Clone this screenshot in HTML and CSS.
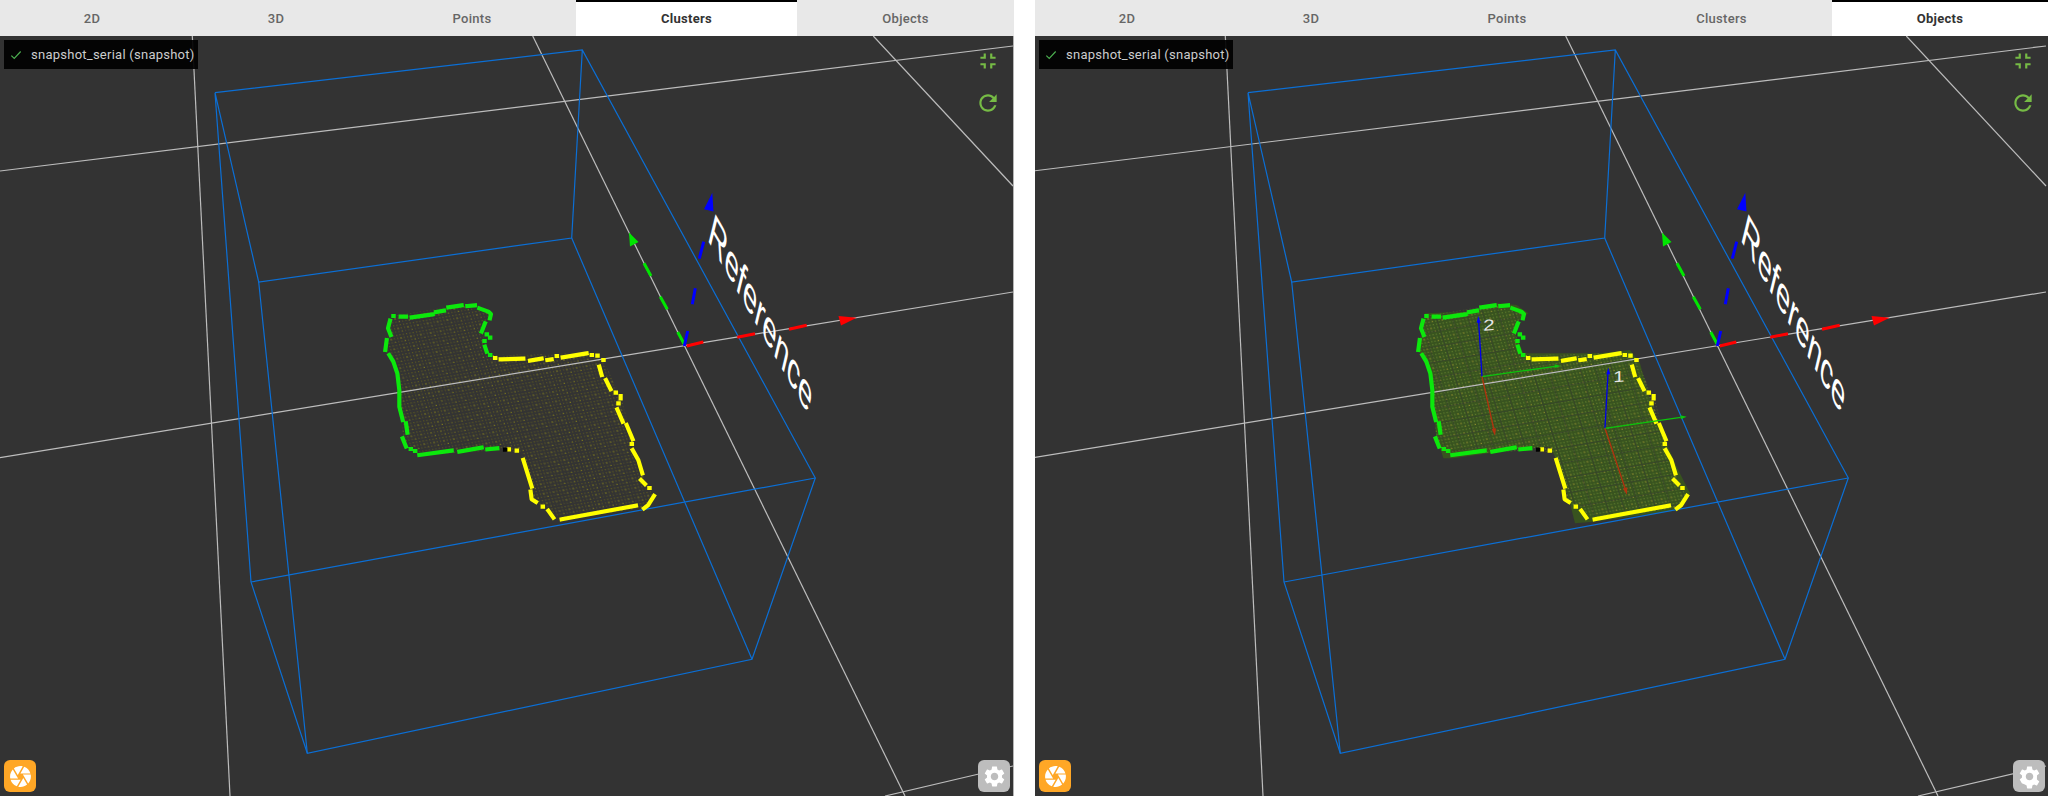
FILE: index.html
```html
<!DOCTYPE html>
<html lang="en">
<head>
<meta charset="utf-8">
<title>Point cloud viewer</title>
<link rel="stylesheet" href="styles.css">
</head>
<body>
<main class="page">
  <section class="panel panel-left">
    <nav class="tabs">
      <a class="tab tab-2d">2D</a>
      <a class="tab tab-3d">3D</a>
      <a class="tab tab-points">Points</a>
      <a class="tab tab-clusters active">Clusters</a>
      <a class="tab tab-objects">Objects</a>
    </nav>
    <div class="viewport">
      <svg class="scene" viewBox="0 0 1013 760" width="1013" height="760">
        <defs>
          <pattern id="dots" width="30" height="30" patternUnits="userSpaceOnUse" patternTransform="matrix(.985 -.17 .3 .95 0 0)">
            <path class="dot-dim" d="M3 3h3.5v3.5h-3.5zM13 3h3.5v3.5h-3.5zM23 3h3.5v3.5h-3.5zM3 13h3.5v3.5h-3.5zM23 13h3.5v3.5h-3.5zM3 23h3.5v3.5h-3.5zM13 23h3.5v3.5h-3.5z"/>
            <path class="dot-bright" d="M13 13h4v4h-4zM23 23h4v4h-4z"/>
          </pattern>
          <pattern id="dots-lit" width="30" height="30" patternUnits="userSpaceOnUse" patternTransform="matrix(.985 -.17 .3 .95 0 0)">
            <path class="dot-lit-dim" d="M3 3h4v4h-4zM13 3h4v4h-4zM23 3h4v4h-4zM3 13h4v4h-4zM23 13h4v4h-4zM3 23h4v4h-4zM13 23h4v4h-4z"/>
            <path class="dot-lit-bright" d="M13 13h4v4h-4zM23 23h4v4h-4z"/>
          </pattern>
          <pattern id="bands" width="46" height="46" patternUnits="userSpaceOnUse" patternTransform="matrix(.985 -.17 .3 .95 8 5)">
            <path class="band" d="M0 0H46M0 0V46"/>
          </pattern>
          <polygon id="cloud-shape" points="100,78 300,45 390,70 365,120 385,195 680,190 730,210 782,320 847,550 880,618 850,655 605,688 525,636 485,490 430,480 175,495 130,445 112,250 76,180 88,100"/>
          <g id="lines">
            <g class="grid-line">
              <line x1="0" y1="135" x2="1013" y2="10"/>
              <line x1="0" y1="421.7" x2="1013" y2="256"/>
              <line x1="885" y1="760" x2="1013" y2="730"/>
              <line x1="192.3" y1="0" x2="230" y2="760"/>
              <line x1="532.7" y1="0" x2="905" y2="760"/>
              <line x1="873.3" y1="0" x2="1013" y2="150"/>
            </g>
            <g class="box-line">
              <path d="M215 56.7L582.3 14L815.3 442L752 623.3L307.3 717.3L251 546L215 56.7L258.7 246L571.7 202L582.3 14"/>
              <path d="M258.7 246L307.3 717.3M251 546L815.3 442M571.7 202L752 623.3"/>
            </g>
          </g>
          <g id="outline" transform="translate(360 254) scale(.3333)">
            <path class="edge-green" d="M100 78h1M122 80H138M155 82L218 73M228 66L252 62M265 52L305 46M322 48L345 46M358 55L385 65L393 72L390 85M375 100L365 125M380 133h1M390 143h1M373 153h1M375 170L380 185M390 195h1M90 92L84 115L92 135M80 150L76 180M88 195L100 215L112 250L118 300L118 350L128 390M138 400L142 428M128 445L138 470M152 477h1M165 483h1M178 495L275 482M298 485L365 473M382 478L412 475"/>
            <path class="edge-yellow" d="M405 204h1M422 208L490 206M510 212L545 206M562 210L575 208M590 198h1M608 202L680 190M695 195h1M712 197h1M730 210h1M718 230L725 255M738 270L752 298M767 308h1M782 318V325M775 340h1M772 358L788 395M800 405L818 448M815 462h1M818 480L835 510L847 550M843 570L855 582M868 594h1M882 618L865 645L852 655M828 647L605 688M580 683L565 662M548 650h1M528 636L515 628L512 605M515 590L490 510M470 482h1M446 478h1"/>
            <path class="edge-black" d="M435 479h1"/>
          </g>
          <g id="reference">
            <path class="axis-red" d="M686.7 310L703.3 306M737.3 301.3L755 297.7M789 293.3L806.7 289.3"/>
            <polygon class="fill-red" points="856.7,281.7 838.5,280 841,289.5"/>
            <path class="axis-green" d="M684.3 308.3L677.7 296M667.3 273.3L660.3 260.7M651 240L644 227.3"/>
            <polygon class="fill-green" points="629,196.5 630,210.5 638.5,206"/>
            <path class="axis-blue" d="M684.3 310L687.7 295M692.3 268.3L695.3 252.3M699.3 222.7L703.7 205.7"/>
            <polygon class="fill-blue" points="712.3,156.7 704,173.3 713.5,175.5"/>
            <text class="ref-label" transform="matrix(.55 .955 -.245 1.01 707 203)">Reference</text>
          </g>
        </defs>
        <g transform="translate(360 254) scale(.3333)">
          <use class="cloud" href="#cloud-shape"/>
          <use class="cloud-bands" href="#cloud-shape"/>
        </g>
        <use href="#lines"/>
        <use href="#outline"/>
        <use href="#reference"/>
      </svg>
      <div class="source-badge">
        <svg class="check" viewBox="0 0 24 24" width="14" height="14"><path d="M4 13l5 5L20 6"/></svg>
        <span>snapshot_serial (snapshot)</span>
      </div>
      <div class="view-tools">
        <svg class="tool-icon" viewBox="0 0 24 24" width="26" height="26"><path d="M5 16h3v3h2v-5H5v2zm3-8H5v2h5V5H8v3zm6 11h2v-3h3v-2h-5v5zm2-11V5h-2v5h5V8h-3z"/></svg>
        <svg class="tool-icon" viewBox="0 0 24 24" width="26" height="26"><path d="M17.65 6.35C16.2 4.9 14.21 4 12 4c-4.42 0-7.99 3.58-7.99 8s3.57 8 7.99 8c3.73 0 6.84-2.55 7.73-6h-2.08c-.82 2.33-3.04 4-5.65 4-3.31 0-6-2.69-6-6s2.69-6 6-6c1.66 0 3.14.69 4.22 1.78L13 11h7V4l-2.35 2.35z"/></svg>
      </div>
      <div class="btn btn-camera"><svg viewBox="0 0 24 24" width="25" height="25"><path d="M9.4 10.5l4.77-8.26C13.47 2.09 12.75 2 12 2c-2.4 0-4.6.85-6.32 2.25l3.66 6.35.06-.1zM21.54 9c-.92-2.92-3.15-5.26-6-6.34L11.88 9h9.66zm.26 1h-7.49l.29.5 4.76 8.25C21 16.97 22 14.61 22 12c0-.69-.07-1.35-.2-2zM8.54 12l-3.9-6.75C3.01 7.03 2 9.39 2 12c0 .69.07 1.35.2 2h7.49l-1.15-2zm-6.08 3c.92 2.92 3.15 5.26 6 6.34L12.12 15H2.46zm11.27 0l-3.9 6.76c.7.15 1.42.24 2.17.24 2.4 0 4.6-.85 6.32-2.25l-3.66-6.35-.93 1.6z"/></svg></div>
      <div class="btn btn-settings"><svg viewBox="0 0 24 24" width="25" height="25"><path d="M19.14 12.94c.04-.3.06-.61.06-.94 0-.32-.02-.64-.07-.94l2.03-1.58c.18-.14.23-.41.12-.61l-1.92-3.32c-.12-.22-.37-.29-.59-.22l-2.39.96c-.5-.38-1.03-.7-1.62-.94l-.36-2.54c-.04-.24-.24-.41-.48-.41h-3.84c-.24 0-.43.17-.47.41l-.36 2.54c-.59.24-1.13.57-1.62.94l-2.39-.96c-.22-.08-.47 0-.59.22L2.74 8.87c-.12.21-.08.47.12.61l2.03 1.58c-.05.3-.09.63-.09.94s.02.64.07.94l-2.03 1.58c-.18.14-.23.41-.12.61l1.92 3.32c.12.22.37.29.59.22l2.39-.96c.5.38 1.03.7 1.62.94l.36 2.54c.05.24.24.41.48.41h3.84c.24 0 .44-.17.47-.41l.36-2.54c.59-.24 1.13-.56 1.62-.94l2.39.96c.22.08.47 0 .59-.22l1.92-3.32c.12-.22.07-.47-.12-.61l-2.01-1.58zM12 15.6c-1.98 0-3.6-1.62-3.6-3.6s1.62-3.6 3.6-3.6 3.6 1.62 3.6 3.6-1.62 3.6-3.6 3.6z"/></svg></div>
    </div>
  </section>
  <section class="panel panel-right">
    <nav class="tabs">
      <a class="tab tab-2d">2D</a>
      <a class="tab tab-3d">3D</a>
      <a class="tab tab-points">Points</a>
      <a class="tab tab-clusters">Clusters</a>
      <a class="tab tab-objects active">Objects</a>
    </nav>
    <div class="viewport">
      <svg class="scene" viewBox="0 0 1013 760" width="1013" height="760">
        <polygon class="cloud-tint" transform="translate(365 254) scale(.3333)" points="75,70 200,65 290,40 350,45 385,70 350,95 345,130 370,190 600,190 690,180 720,220 745,310 770,390 830,530 870,610 840,660 580,695 525,700 510,640 470,510 450,470 370,475 160,505 130,505 110,440 95,310 85,220 55,180 65,130"/>
        <g transform="translate(358 254) scale(.3333)">
          <use class="cloud-lit" href="#cloud-shape"/>
          <use class="cloud-bands-lit" href="#cloud-shape"/>
        </g>
        <g class="scene-shift">
          <use href="#lines"/>
          <use href="#outline"/>
          <use href="#reference"/>
        </g>
        <g transform="translate(365 254) scale(.3333)">
          <path class="obj-blue" d="M246 260L236 95M615 415L624 250"/>
          <polygon class="fill-blue" points="235,78 230,98 242,98"/>
          <polygon class="fill-blue" points="625,233 619,253 631,253"/>
          <path class="obj-green" d="M246 260L465 229M615 415L842 382"/>
          <polygon class="fill-obj-green" points="482,228 464,223 465,234"/>
          <polygon class="fill-obj-green" points="860,380 841,376 843,388"/>
          <path class="obj-red" d="M246 260L282 420M615 415L676 597"/>
          <polygon class="fill-red-obj" points="285,437 275,417 288,415"/>
          <polygon class="fill-red-obj" points="681,614 669,596 682,592"/>
          <text class="obj-label" transform="matrix(1.3 -.08 0 1 250 122)">2</text>
          <text class="obj-label" transform="matrix(1.3 -.08 0 1 640 277)">1</text>
        </g>
      </svg>
      <div class="source-badge">
        <svg class="check" viewBox="0 0 24 24" width="14" height="14"><path d="M4 13l5 5L20 6"/></svg>
        <span>snapshot_serial (snapshot)</span>
      </div>
      <div class="view-tools">
        <svg class="tool-icon" viewBox="0 0 24 24" width="26" height="26"><path d="M5 16h3v3h2v-5H5v2zm3-8H5v2h5V5H8v3zm6 11h2v-3h3v-2h-5v5zm2-11V5h-2v5h5V8h-3z"/></svg>
        <svg class="tool-icon" viewBox="0 0 24 24" width="26" height="26"><path d="M17.65 6.35C16.2 4.9 14.21 4 12 4c-4.42 0-7.99 3.58-7.99 8s3.57 8 7.99 8c3.73 0 6.84-2.55 7.73-6h-2.08c-.82 2.33-3.04 4-5.65 4-3.31 0-6-2.69-6-6s2.69-6 6-6c1.66 0 3.14.69 4.22 1.78L13 11h7V4l-2.35 2.35z"/></svg>
      </div>
      <div class="btn btn-camera"><svg viewBox="0 0 24 24" width="25" height="25"><path d="M9.4 10.5l4.77-8.26C13.47 2.09 12.75 2 12 2c-2.4 0-4.6.85-6.32 2.25l3.66 6.35.06-.1zM21.54 9c-.92-2.92-3.15-5.26-6-6.34L11.88 9h9.66zm.26 1h-7.49l.29.5 4.76 8.25C21 16.97 22 14.61 22 12c0-.69-.07-1.35-.2-2zM8.54 12l-3.9-6.75C3.01 7.03 2 9.39 2 12c0 .69.07 1.35.2 2h7.49l-1.15-2zm-6.08 3c.92 2.92 3.15 5.26 6 6.34L12.12 15H2.46zm11.27 0l-3.9 6.76c.7.15 1.42.24 2.17.24 2.4 0 4.6-.85 6.32-2.25l-3.66-6.35-.93 1.6z"/></svg></div>
      <div class="btn btn-settings"><svg viewBox="0 0 24 24" width="25" height="25"><path d="M19.14 12.94c.04-.3.06-.61.06-.94 0-.32-.02-.64-.07-.94l2.03-1.58c.18-.14.23-.41.12-.61l-1.92-3.32c-.12-.22-.37-.29-.59-.22l-2.39.96c-.5-.38-1.03-.7-1.62-.94l-.36-2.54c-.04-.24-.24-.41-.48-.41h-3.84c-.24 0-.43.17-.47.41l-.36 2.54c-.59.24-1.13.57-1.62.94l-2.39-.96c-.22-.08-.47 0-.59.22L2.74 8.87c-.12.21-.08.47.12.61l2.03 1.58c-.05.3-.09.63-.09.94s.02.64.07.94l-2.03 1.58c-.18.14-.23.41-.12.61l1.92 3.32c.12.22.37.29.59.22l2.39.96c.5.38 1.03.7 1.62.94l.36 2.54c.05.24.24.41.48.41h3.84c.24 0 .44-.17.47-.41l.36-2.54c.59-.24 1.13-.56 1.62-.94l2.39.96c.22.08.47 0 .59-.22l1.92-3.32c.12-.22.07-.47-.12-.61l-2.01-1.58zM12 15.6c-1.98 0-3.6-1.62-3.6-3.6s1.62-3.6 3.6-3.6 3.6 1.62 3.6 3.6-1.62 3.6-3.6 3.6z"/></svg></div>
    </div>
  </section>
</main>
</body>
</html>
```

FILE: styles.css
```css
* { box-sizing: border-box; }
html, body { margin: 0; height: 100%; background: #fff; overflow: hidden; }
body { font-family: Roboto, "Liberation Sans", sans-serif; }

.page { display: flex; gap: 21px; height: 796px; }
.panel { display: flex; flex-direction: column; min-width: 0; }
.panel-left { width: 1014px; }
.panel-right { flex: 1; }

.tabs { display: flex; flex: 0 0 36px; background: #e8e8e8; }
.tab {
  display: flex; align-items: center; justify-content: center;
  font-size: 13px; font-weight: 500; letter-spacing: .3px; color: #666;
  border-top: 2px solid transparent; padding-bottom: 2px;
}
.tab.active { background: #fff; border-top-color: #000; color: #333; font-weight: 700; }
.tab-2d, .tab-3d { width: 184px; }
.tab-points { width: 208px; }
.tab-clusters { width: 221px; }
.tab-objects { flex: 1; }

.viewport { position: relative; flex: 1; background: #333; overflow: hidden; }
.panel-left .viewport { border-right: 1px solid #b5b5b5; }
.scene { position: absolute; left: 0; top: 0; display: block; }
.scene-shift { transform: translateX(-2px); }

.grid-line { stroke: #bdbdbd; stroke-width: 1.2; fill: none; }
.box-line { stroke: #0b6fd6; stroke-width: 1.2; fill: none; stroke-linejoin: miter; }

.cloud { fill: url(#dots); }
.cloud-lit { fill: url(#dots-lit); }
.cloud-bands, .cloud-bands-lit { fill: url(#bands); }
.cloud-tint { fill: #38531f; }
.dot-dim { fill: #5f5c1e; }
.dot-bright { fill: #7d791d; }
.dot-lit-dim { fill: #5c7a2a; }
.dot-lit-bright { fill: #8c8c2e; }
.band { fill: none; stroke: #333; stroke-opacity: .45; stroke-width: 6; }

.edge-green, .edge-yellow, .edge-black { fill: none; stroke-width: 12.5; stroke-linecap: square; stroke-linejoin: round; }
.edge-green { stroke: #0ce80c; }
.edge-yellow { stroke: #ffff00; }
.edge-black { stroke: #000; }

.axis-red, .axis-green, .axis-blue { fill: none; stroke-width: 3; }
.axis-red { stroke: #ff0000; }
.axis-green { stroke: #00e600; }
.axis-blue { stroke: #0000ff; }
.fill-red { fill: #ff0000; }
.fill-green { fill: #00e600; }
.fill-blue { fill: #0000ff; }
.ref-label { font-family: "Liberation Sans", sans-serif; font-size: 40px; fill: #fff; }

.obj-blue, .obj-green, .obj-red { fill: none; stroke-width: 4; }
.obj-blue { stroke: #0000e6; }
.obj-green { stroke: #0cc40c; }
.obj-red { stroke: #b0330f; }
.fill-obj-green { fill: #0cc40c; }
.fill-red-obj { fill: #b0330f; }
.obj-label { font-family: "Liberation Sans", sans-serif; font-size: 47px; fill: #e6e6e6; }

.source-badge {
  position: absolute; left: 4px; top: 4px; height: 29px; width: 194px;
  display: flex; align-items: center; gap: 8px; padding-left: 5px;
  background: rgba(0, 0, 0, .92); color: #ccc; font-size: 13px; letter-spacing: .25px; white-space: nowrap;
}
.check { flex: none; fill: none; stroke: #4caf50; stroke-width: 2; }

.view-tools {
  position: absolute; left: 975px; top: 12px;
  display: flex; flex-direction: column; gap: 16px;
}
.tool-icon { display: block; fill: #76bb45; }

.btn {
  position: absolute; top: 724px; width: 32px; height: 32px; border-radius: 6px;
  display: flex; align-items: center; justify-content: center;
}
.btn svg { display: block; fill: #fff; }
.btn-camera { left: 4px; background: #ffa726; }
.btn-settings { left: 978px; background: #bdbdbd; }
```
